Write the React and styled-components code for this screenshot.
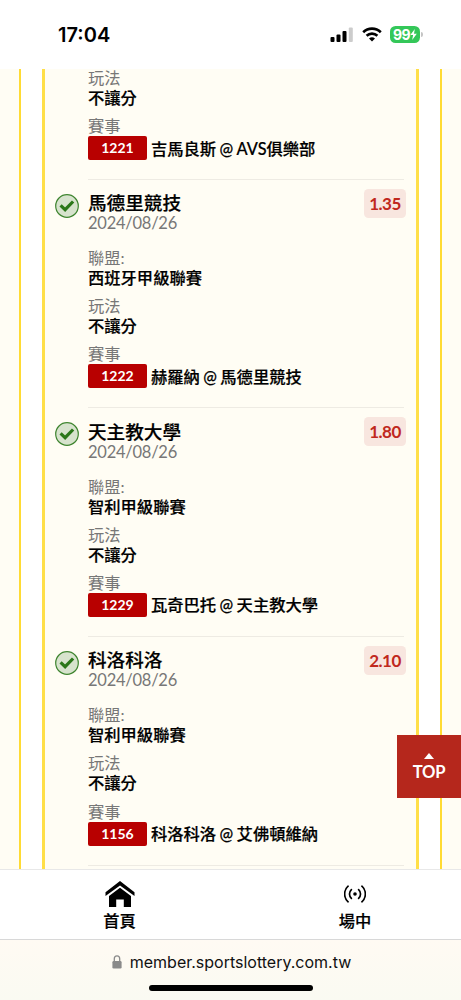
import styled, { createGlobalStyle } from "styled-components";

const GlobalStyle = createGlobalStyle`
    * {
        box-sizing: border-box;
    }
    body {
        margin: 0;
        background-color: #fff;
        font-family: Lato, "Noto Sans CJK TC", sans-serif;
        color: #000;
    }
`;

const Screen = styled.div`
    position: relative;
    display: flex;
    flex-direction: column;
    width: 461px;
    height: 1000px;
    overflow: hidden;
    background-color: #fff;
`;

const StatusBar = styled.header`
    display: flex;
    justify-content: space-between;
    align-items: center;
    flex: none;
    height: 69px;
    padding: 0 38px 0 58px;
`;
const Clock = styled.span`
    font-family: Inter, sans-serif;
    font-size: 20px;
    font-weight: 600;
    line-height: 24px;
    letter-spacing: 0;
`;
const StatusIcons = styled.div`
    display: flex;
    align-items: center;
`;
const Battery = styled.div`
    display: flex;
    align-items: center;
    justify-content: center;
    width: 30px;
    height: 17px;
    margin-left: 8px;
    border-radius: 5.5px;
    background-color: #34c759;
    color: #fff;
    font-family: Inter, sans-serif;
    font-size: 14px;
    font-weight: 700;
    letter-spacing: -0.5px;
`;
const BatteryTip = styled.span`
    width: 2px;
    height: 5px;
    margin-left: 1px;
    border-radius: 0 2px 2px 0;
    background-color: #c4c4c4;
`;

const Content = styled.main`
    display: flex;
    justify-content: space-between;
    flex: none;
    height: 800px;
    overflow: hidden;
`;
const Edge = styled.div`
    width: 21px;
    background-color: #fffdf4;
    border: 0 solid #ffdb33;
    ${(props) =>
        props.$right ? "border-left-width: 2px;" : "border-right-width: 2px;"}
`;
const Card = styled.section`
    display: flex;
    flex-direction: column;
    justify-content: flex-end;
    width: 377px;
    padding: 0 12px 3.4px 10px;
    background-color: #fffdf4;
    border: 0 solid #ffdf48;
    border-width: 0 3px;
`;

const Bet = styled.article`
    display: flex;
    flex: none;
    height: ${(props) => (props.$partial ? 111.8 : 228.6)}px;
`;
const CheckColumn = styled.div`
    flex: none;
    width: 33px;
    padding-top: 14px;
`;
const Details = styled.div`
    flex: none;
    width: 316px;
    padding-top: ${(props) => (props.$partial ? 0 : 13.2)}px;
    border-bottom: 1.6px solid #eeebe3;
`;
const BetTop = styled.div`
    display: flex;
    justify-content: space-between;
    height: 55px;
    margin-right: -2px;
`;
const Team = styled.h3`
    margin: 0;
    font-size: 18.6px;
    font-weight: 500;
    line-height: 20px;
    -webkit-text-stroke: 0.2px;
`;
const BetDate = styled.div`
    color: #777;
    font-size: 16.5px;
    line-height: 20px;
    letter-spacing: -0.25px;
`;
const Odds = styled.div`
    width: 42px;
    height: 29px;
    margin-top: -4.5px;
    border-radius: 4.5px;
    background-color: #f8e6df;
    color: #c0281d;
    font-size: 17px;
    font-weight: 700;
    line-height: 30px;
    letter-spacing: -0.5px;
    text-align: center;
`;
const Label = styled.div`
    color: #777;
    font-size: 16.25px;
    line-height: 20px;
`;
const Value = styled.div`
    margin-bottom: 8.2px;
    font-size: 16.3px;
    font-weight: 500;
    line-height: 20px;
    -webkit-text-stroke: 0.2px;
`;
const Match = styled.div`
    display: flex;
    align-items: center;
    height: 24px;
    font-size: 16.3px;
    font-weight: 500;
    line-height: 23px;
    word-spacing: -0.7px;
    white-space: nowrap;
    -webkit-text-stroke: 0.2px;
`;
const MatchId = styled.span`
    width: 59px;
    height: 24px;
    margin-right: 4px;
    border-radius: 2px;
    background-color: #b80000;
    color: #fff;
    font-size: 14px;
    font-weight: 700;
    line-height: 24px;
    text-align: center;
    -webkit-text-stroke: 0;
`;

const TopButton = styled.button`
    position: absolute;
    right: 0;
    top: 735px;
    display: flex;
    flex-direction: column;
    align-items: center;
    width: 64px;
    height: 63px;
    padding: 18px 0 0;
    border: 0;
    background-color: #b5271c;
    color: #fff;
    font-family: Lato, sans-serif;
    font-size: 16.6px;
    font-weight: 700;
    line-height: 20px;
    letter-spacing: -0.3px;
`;
const Caret = styled.span`
    margin-bottom: 3px;
    border: 5px solid transparent;
    border-top: 0;
    border-bottom: 6px solid #fff;
`;

const TabBar = styled.nav`
    display: flex;
    flex: none;
    height: 71px;
    border-top: 1px solid #e8e8e8;
    border-bottom: 1px solid #d8d8d8;
`;
const Tab = styled.div`
    display: flex;
    flex-direction: column;
    align-items: center;
    flex: none;
    width: ${(props) => props.$width}px;
    padding-top: 8px;
    font-size: 16.25px;
    font-weight: 500;
    line-height: 24px;
    -webkit-text-stroke: 0.2px;
`;
const TabIcon = styled.div`
    display: flex;
    align-items: center;
    justify-content: center;
    height: 31px;
`;

const BrowserBar = styled.footer`
    display: flex;
    flex-direction: column;
    align-items: center;
    flex: none;
    height: 60px;
    padding-top: 10px;
    background: linear-gradient(#fffaf3, #fafaf2);
`;
const Address = styled.div`
    display: flex;
    align-items: center;
    height: 24px;
    gap: 8px;
    padding-left: 2px;
    font-family: Inter, sans-serif;
    font-size: 16px;
    color: #111;
`;
const HomeIndicator = styled.div`
    width: 164px;
    height: 6px;
    margin-top: 11px;
    border-radius: 3px;
    background-color: #000;
`;

// the first bet is scrolled past its heading and league
const bets = [
    {
        id: "1221",
        match: "吉馬良斯 @ AVS俱樂部",
        partial: true,
    },
    {
        id: "1222",
        team: "馬德里競技",
        odds: "1.35",
        league: "西班牙甲級聯賽",
        match: "赫羅納 @ 馬德里競技",
    },
    {
        id: "1229",
        team: "天主教大學",
        odds: "1.80",
        league: "智利甲級聯賽",
        match: "瓦奇巴托 @ 天主教大學",
    },
    {
        id: "1156",
        team: "科洛科洛",
        odds: "2.10",
        league: "智利甲級聯賽",
        match: "科洛科洛 @ 艾佛頓維納",
    },
];

function SignalIcon() {
    return (
        <svg width="24" height="15" viewBox="0 0 24 15">
            <rect x="0.5" y="10" width="4" height="5" rx="1" />
            <rect x="6.5" y="7.5" width="4" height="7.5" rx="1" />
            <rect x="12.5" y="4" width="4" height="11" rx="1" />
            <rect x="18.8" y="0.5" width="4" height="14.5" rx="1" fill="#ccc" />
        </svg>
    );
}

const WifiSvg = styled.svg`
    margin-left: 8px;
`;

function WifiIcon() {
    return (
        <WifiSvg
            width="20"
            height="15"
            viewBox="0 0 20 15"
            fill="none"
            stroke="#000"
            strokeWidth="2.6"
        >
            <path d="M1.2 5.2a12.6 12.6 0 0 1 17.6 0" />
            <path d="M4.6 8.8a7.8 7.8 0 0 1 10.8 0" />
            <path d="M10 14.6l-3-3a4.3 4.3 0 0 1 6 0z" fill="#000" stroke="none" />
        </WifiSvg>
    );
}

function BoltIcon() {
    return (
        <svg width="7" height="11" viewBox="0 0 7 11" fill="#fff">
            <path d="M4.8 0L0.3 6h2.8L2.2 11 6.8 4.7H4z" />
        </svg>
    );
}

function CheckIcon() {
    return (
        <svg width="24" height="24" viewBox="0 0 24 24" fill="none">
            <circle cx="12" cy="12" r="11.3" fill="#d7e3cd" stroke="#3f8530" strokeWidth="1.2" />
            <path d="M5.6 11.4l4.5 4.3 8-8.2" stroke="#2b7719" strokeWidth="3.2" />
        </svg>
    );
}

function HomeIcon() {
    return (
        <svg width="30" height="26" viewBox="0 0 30 26">
            <path d="M15 0L0.5 11.2v3.9L15 4.4l14.5 10.7v-3.9z" />
            <path d="M15 6.7L4 14.9V26h7.2v-7.5h7.6V26H26V14.9z" />
        </svg>
    );
}

function LiveIcon() {
    return (
        <svg
            width="22"
            height="18"
            viewBox="0 0 22 18"
            fill="none"
            stroke="#000"
            strokeWidth="1.7"
            strokeLinecap="round"
        >
            <circle cx="11" cy="9" r="1.8" fill="#000" stroke="none" />
            <path d="M7.4 4.6a6 6 0 0 0 0 8.8M14.6 4.6a6 6 0 0 1 0 8.8" />
            <path d="M4.1 1.2a10.5 10.5 0 0 0 0 15.6M17.9 1.2a10.5 10.5 0 0 1 0 15.6" />
        </svg>
    );
}

function LockIcon() {
    return (
        <svg width="10" height="14" viewBox="0 0 10 14">
            <path d="M2.3 7V3.7a2.7 2.9 0 0 1 5.4 0V7" fill="none" stroke="#8a8a8a" strokeWidth="1.3" />
            <rect x="0.4" y="6" width="9.2" height="7.5" rx="1.3" fill="#8a8a8a" />
        </svg>
    );
}

export default function App() {
    return (
        <Screen>
            <GlobalStyle />
            <StatusBar>
                <Clock>17:04</Clock>
                <StatusIcons>
                    <SignalIcon />
                    <WifiIcon />
                    <Battery>
                        99
                        <BoltIcon />
                    </Battery>
                    <BatteryTip />
                </StatusIcons>
            </StatusBar>
            <Content>
                <Edge />
                <Card>
                    {bets.map((bet) => (
                        <Bet key={bet.id} $partial={bet.partial}>
                            <CheckColumn>{!bet.partial && <CheckIcon />}</CheckColumn>
                            <Details $partial={bet.partial}>
                                {!bet.partial && (
                                    <>
                                        <BetTop>
                                            <div>
                                                <Team>{bet.team}</Team>
                                                <BetDate>2024/08/26</BetDate>
                                            </div>
                                            <Odds>{bet.odds}</Odds>
                                        </BetTop>
                                        <Label>聯盟:</Label>
                                        <Value>{bet.league}</Value>
                                    </>
                                )}
                                <Label>玩法</Label>
                                <Value>不讓分</Value>
                                <Label>賽事</Label>
                                <Match>
                                    <MatchId>{bet.id}</MatchId>
                                    {bet.match}
                                </Match>
                            </Details>
                        </Bet>
                    ))}
                </Card>
                <Edge $right />
            </Content>
            <TabBar>
                <Tab $width={239}>
                    <TabIcon>
                        <HomeIcon />
                    </TabIcon>
                    首頁
                </Tab>
                <Tab $width={232}>
                    <TabIcon>
                        <LiveIcon />
                    </TabIcon>
                    場中
                </Tab>
            </TabBar>
            <BrowserBar>
                <Address>
                    <LockIcon />
                    member.sportslottery.com.tw
                </Address>
                <HomeIndicator />
            </BrowserBar>
            <TopButton>
                <Caret />
                TOP
            </TopButton>
        </Screen>
    );
}
